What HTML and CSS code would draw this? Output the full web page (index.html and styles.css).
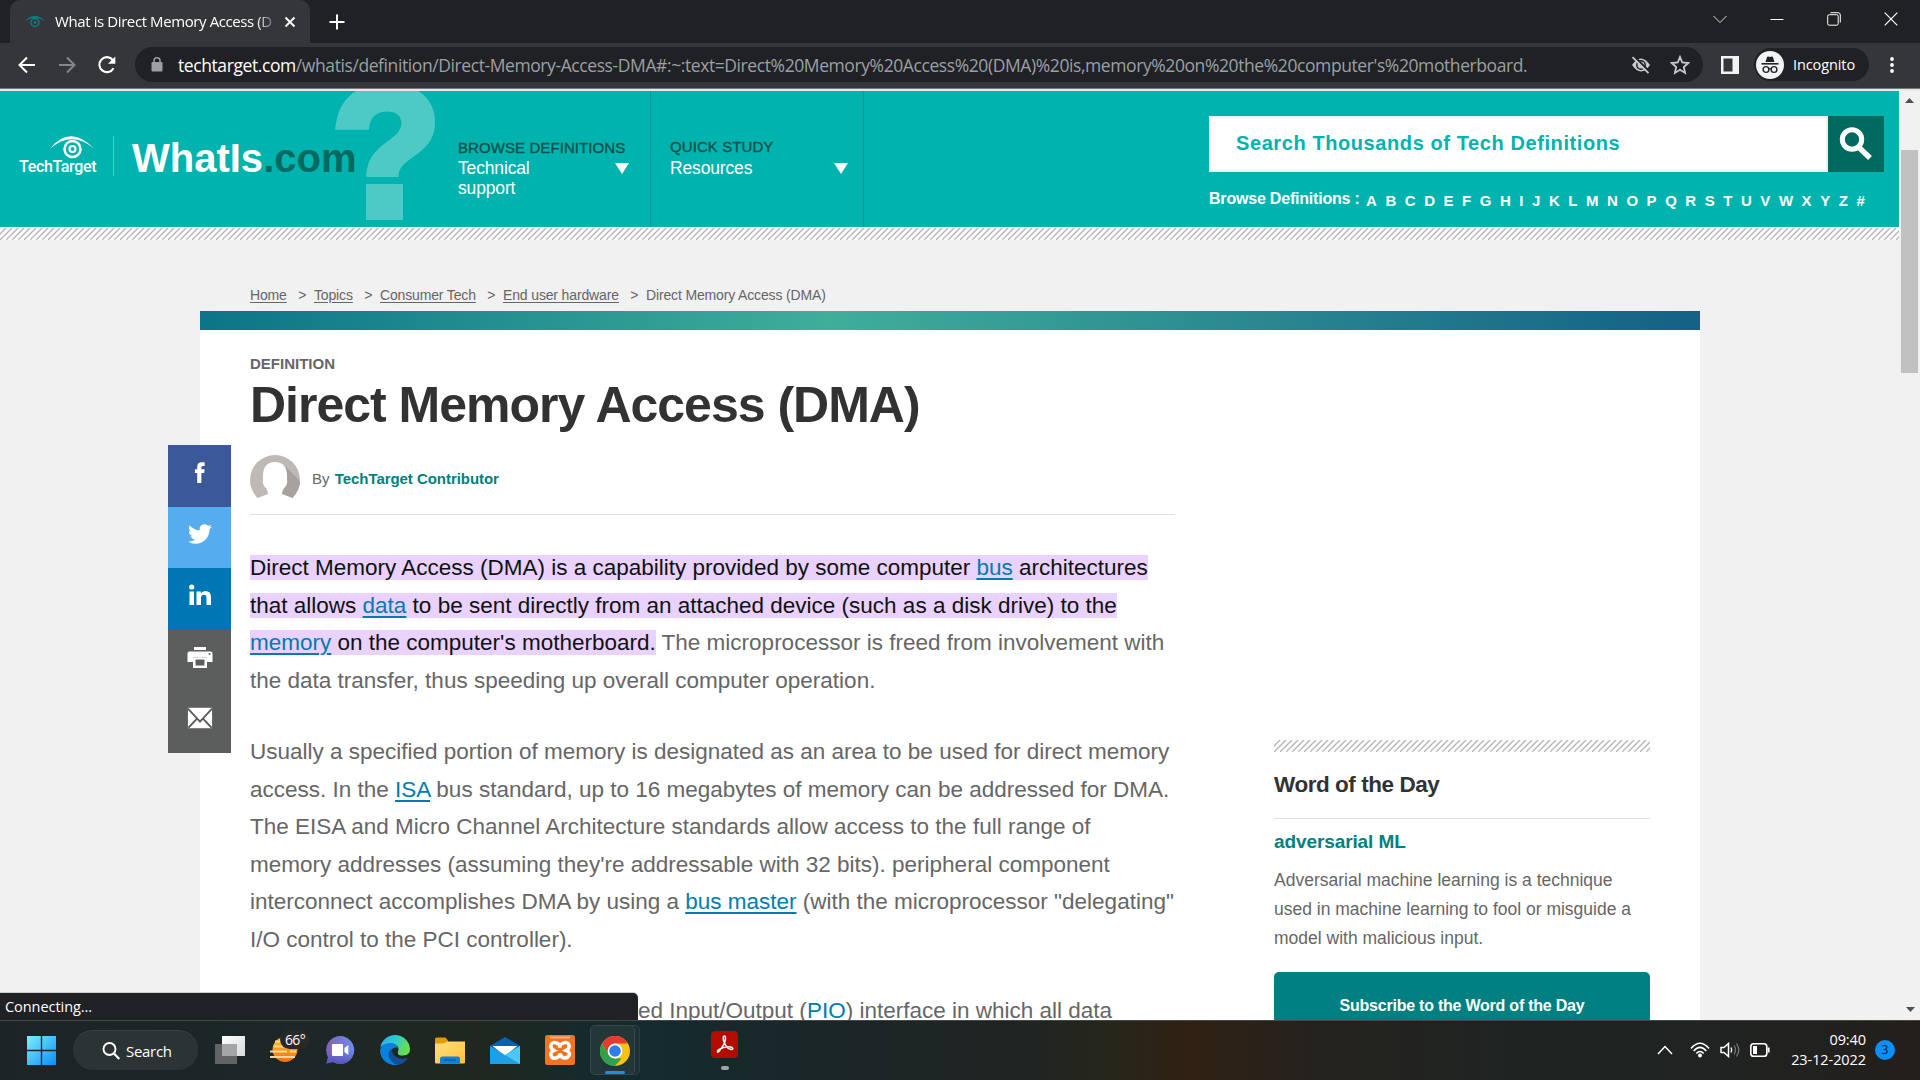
FILE: index.html
```html
<!DOCTYPE html>
<html lang="en">
<head>
<meta charset="utf-8">
<title>What is Direct Memory Access (DMA)?</title>
<link rel="stylesheet" href="styles.css">
</head>
<body>
<div class="screen">
  <div class="tabstrip">
    <div class="tab">
      <svg class="favicon" viewBox="0 0 20 14"><path d="M0 6Q10-4 20 6Q10 0 0 6Z" fill="#0a7f80"/><circle cx="10" cy="7.500" r="4" fill="none" stroke="#0a7f80" stroke-width="1.500"/><circle cx="10" cy="7.500" r="1.600" fill="#0a7f80"/></svg>
      <span class="tab-title">What is Direct Memory Access (D</span>
      <svg class="tab-close" viewBox="0 0 12 12"><path d="M1.500 1.500l9 9M10.500 1.500l-9 9" stroke="#fff" stroke-width="1.900"/></svg>
    </div>
    <svg class="newtab" viewBox="0 0 16 16"><path d="M8 .5v15M.5 8h15" stroke="#fff" stroke-width="2"/></svg>
    <div class="winctl">
      <svg viewBox="0 0 14 14"><path d="M.5 4l6.500 6.500L13.500 4" fill="none" stroke="#ddd"/></svg>
      <svg viewBox="0 0 14 14"><path d="M.5 7.500h13" stroke="#fff"/></svg>
      <svg viewBox="0 0 14 14"><rect x=".7" y="2.700" width="10.500" height="10.500" rx="1.500" fill="none" stroke="#fff"/><path d="M3.500.7h7.500q2.300 0 2.300 2.300v7.500" fill="none" stroke="#fff"/></svg>
      <svg viewBox="0 0 14 14"><path d="M.7.7l12.600 12.600M13.300.7L.7 13.300" stroke="#fff" stroke-width="1.200"/></svg>
    </div>
  </div>
  <div class="toolbar">
    <svg class="nav-i" viewBox="0 0 20 20"><path d="M18 10H3M10 2.500L2.500 10l7.500 7.500" fill="none" stroke="#fff" stroke-width="2"/></svg>
    <svg class="nav-i" viewBox="0 0 20 20"><path d="M2 10h15M10 2.500l7.500 7.500-7.500 7.500" fill="none" stroke="#84868a" stroke-width="2"/></svg>
    <svg class="nav-i" viewBox="0 0 20 20"><path d="M16.500 13.200A7.500 7.500 0 1 1 15.800 5" fill="none" stroke="#fff" stroke-width="2.100"/><path d="M18.300 1.500v7.300h-7.300z" fill="#fff"/></svg>
    <div class="omnibox">
      <svg class="lock" viewBox="0 0 12 15"><rect x=".5" y="5" width="11" height="9.500" rx="1.200" fill="#9aa0a6"/><path d="M3 6V3.800a3 3 0 0 1 6 0V6" fill="none" stroke="#9aa0a6" stroke-width="1.500"/></svg>
      <span class="url"><b>techtarget.com</b>/whatis/definition/Direct-Memory-Access-DMA#:~:text=Direct%20Memory%20Access%20(DMA)%20is,memory%20on%20the%20computer's%20motherboard.</span>
      <svg class="eyeoff" viewBox="0 0 20 18"><path d="M1 9Q10-4 19 9Q10 22 1 9Z" fill="#c8cacd"/><circle cx="10" cy="9" r="4.200" fill="none" stroke="#202124" stroke-width="1.500"/><path d="M3 .2L19 16.200" stroke="#202124" stroke-width="2.200"/><path d="M1.500 1.200L17.500 17.200" stroke="#c8cacd" stroke-width="1.800"/></svg>
      <svg class="star" viewBox="0 0 20 20"><path d="M10 2l2.300 5.500 6 .5-4.500 4 1.300 5.900L10 14.800l-5.100 3.100L6.200 12 1.700 8l6-.5z" fill="none" stroke="#c8cacd" stroke-width="1.800"/></svg>
    </div>
    <svg class="panel" viewBox="0 0 18 18"><path d="M0 0h18v18H0zM2.500 2.500v13h9v-13z" fill="#f1f3f4" fill-rule="evenodd"/></svg>
    <div class="incog">
      <svg viewBox="0 0 28 28"><circle cx="14" cy="14" r="14" fill="#f1f3f4"/><path d="M9.500 11l1.600-5q.3-.8 1.100-.5l1.800.5 1.800-.5q.8-.3 1.100.5l1.600 5z" fill="#202124"/><path d="M5.500 12.800h17" stroke="#202124" stroke-width="1.600"/><g fill="none" stroke="#202124" stroke-width="1.400"><circle cx="10" cy="18.500" r="2.900"/><circle cx="18" cy="18.500" r="2.900"/><path d="M12.900 18q1.100-.8 2.200 0"/></g></svg>
      <span>Incognito</span>
    </div>
    <svg class="dots" viewBox="0 0 4 18"><circle cx="2" cy="3" r="1.900" fill="#fff"/><circle cx="2" cy="9" r="1.900" fill="#fff"/><circle cx="2" cy="15" r="1.900" fill="#fff"/></svg>
  </div>
  <div class="viewport">
    <div class="page">
      <header class="site">
        <span class="question">?</span><i class="question-dot"></i>
        <div class="tt">
          <svg viewBox="0 0 44 24"><path d="M0 12.500Q20-12 44 12.500Q22-6 0 12.500Z" fill="#fff"/><circle cx="22.500" cy="13" r="8" fill="none" stroke="#fff" stroke-width="2.500"/><circle cx="22.500" cy="13" r="3" fill="none" stroke="#fff" stroke-width="2.200"/></svg>
          <span>TechTarget</span>
        </div>
        <div class="brand">WhatIs<span>.com</span></div>
        <nav class="menu menu-a">
          <p class="cap">BROWSE DEFINITIONS</p>
          <div class="pick"><span>Technical<br>support</span><i class="tri"></i></div>
        </nav>
        <nav class="menu menu-b">
          <p class="cap">QUICK STUDY</p>
          <div class="pick"><span>Resources</span><i class="tri"></i></div>
        </nav>
        <div class="finder">
          <div class="search">
            <div class="field"><span>Search Thousands of Tech Definitions</span></div>
            <div class="go"><svg viewBox="0 0 34 34"><circle cx="13" cy="12.500" r="9.700" fill="none" stroke="#fff" stroke-width="5"/><path d="M19.500 20l11.500 11" stroke="#fff" stroke-width="5.500"/></svg></div>
          </div>
          <div class="az"><b>Browse Definitions :</b><div class="letters"><span>A</span><span>B</span><span>C</span><span>D</span><span>E</span><span>F</span><span>G</span><span>H</span><span>I</span><span>J</span><span>K</span><span>L</span><span>M</span><span>N</span><span>O</span><span>P</span><span>Q</span><span>R</span><span>S</span><span>T</span><span>U</span><span>V</span><span>W</span><span>X</span><span>Y</span><span>Z</span><span>#</span></div></div>
        </div>
      </header>
      <svg class="hatch top-hatch" width="1899" height="12"><defs><pattern id="h" width="6" height="12" patternUnits="userSpaceOnUse"><path d="M-6 12L6 0M0 12L12 0M-12 12L0 0" stroke="#b5b5b5" stroke-width="1.300"/></pattern></defs><rect width="1899" height="12" fill="url(#h)"/></svg>
      <div class="crumbs"><a>Home</a><i>&gt;</i><a>Topics</a><i>&gt;</i><a>Consumer Tech</a><i>&gt;</i><a>End user hardware</a><i>&gt;</i><span>Direct Memory Access (DMA)</span></div>
      <main class="card">
        <article>
          <p class="kicker">DEFINITION</p>
          <h1>Direct Memory Access (DMA)</h1>
          <div class="byline">
            <svg viewBox="0 0 50 50"><defs><clipPath id="av"><circle cx="25" cy="25" r="25"/></clipPath></defs><g clip-path="url(#av)"><path d="M0 0h50v50H0z" fill="#bfb9b5"/><path d="M36 12L60 36V50H25V35z" fill="#a8a29e"/></g><path d="M5 44L18 39Q18 36 16 33Q12 30 13 24Q12 7 25 7Q38 7 37 24Q38 30 34 33Q32 36 32 39L45 44V51H5z" fill="#fff"/></svg>
            <span>By <b>TechTarget Contributor</b></span>
          </div>
          <div class="body">
            <p><mark>Direct Memory Access (DMA) is a capability provided by some computer <a>bus</a> architectures<br>that allows <a>data</a> to be sent directly from an attached device (such as a disk drive) to the<br><a>memory</a> on the computer's motherboard.</mark> The microprocessor is freed from involvement with<br>the data transfer, thus speeding up overall computer operation.</p>
            <p>Usually a specified portion of memory is designated as an area to be used for direct memory<br>access. In the <a>ISA</a> bus standard, up to 16 megabytes of memory can be addressed for DMA.<br>The EISA and Micro Channel Architecture standards allow access to the full range of<br>memory addresses (assuming they're addressable with 32 bits). peripheral component<br>interconnect accomplishes DMA by using a <a>bus master</a> (with the microprocessor "delegating"<br>I/O control to the PCI controller).</p>
            <p class="last">ed Input/Output (<a class="plain">PIO</a>) interface in which all data</p>
          </div>
        </article>
        <aside>
          <svg class="hatch" width="376" height="12"><rect width="376" height="12" fill="url(#h)"/></svg>
          <h2>Word of the Day</h2>
          <h3>adversarial ML</h3>
          <p>Adversarial machine learning is a technique<br>used in machine learning to fool or misguide a<br>model with malicious input.</p>
          <div class="subscribe">Subscribe to the Word of the Day</div>
        </aside>
      </main>
      <div class="social">
        <div class="s fb"><svg viewBox="0 0 26 26"><path d="M10 25V14H7.500V10H10V7.500Q10 2.500 15 2.500H18V6.500H16Q14.500 6.500 14.500 8V10H18L17.500 14H14.500V25z" fill="#fff"/></svg></div>
        <div class="s tw"><svg viewBox="0 0 24 24"><path d="M23.950 4.570a10 10 0 0 1-2.820.775 4.960 4.960 0 0 0 2.160-2.720c-.950.555-2 .959-3.130 1.180a4.920 4.920 0 0 0-8.380 4.480C7.690 8.100 4.070 6.130 1.640 3.160a4.820 4.820 0 0 0-.666 2.470c0 1.710.870 3.210 2.190 4.100a4.900 4.900 0 0 1-2.230-.616v.060a4.920 4.920 0 0 0 3.950 4.830 5 5 0 0 1-2.210.085 4.940 4.940 0 0 0 4.600 3.420A9.870 9.870 0 0 1 0 19.540a14 14 0 0 0 7.550 2.210c9.050 0 14-7.500 14-13.990 0-.21 0-.42-.015-.63a9.900 9.900 0 0 0 2.410-2.560z" fill="#fff"/></svg></div>
        <div class="s li"><svg viewBox="0 0 24 24"><path d="M1.500 8.500h4.500V22H1.500zM8.500 8.500h4.300v2Q14.200 8 17.300 8 23 8 23 14v8h-4.500v-7.200q0-3-2.500-3-3 0-3 3.200v7H8.500z" fill="#fff"/><circle cx="3.700" cy="4" r="2.600" fill="#fff"/></svg></div>
        <div class="s gr"><svg viewBox="0 0 26 24"><path d="M7 2h12v3H7zM2.500 6.500h21q2 0 2 2V17H20v-4.500H6V17H.5V8.500q0-2 2-2z" fill="#fff"/><path d="M6 12.500h14V23H6zM8.500 14.500v6h9v-6z" fill="#fff" fill-rule="evenodd"/><circle cx="22.500" cy="9" r="1" fill="#5c5e5d"/></svg></div>
        <div class="s gr"><svg viewBox="0 0 28 24"><path d="M1 1h26v22H1z" fill="#fff"/><path d="M1 2l13 14L27 2M1.500 22.500L11 12.500M26.500 22.500L17 12.500" fill="none" stroke="#5c5e5d" stroke-width="2"/></svg></div>
      </div>
    </div>
    <div class="scroll"><i class="up"></i><i class="thumb"></i><i class="down"></i></div>
    <div class="status">Connecting...</div>
  </div>
  <div class="taskbar">
    <div class="apps">
      <svg class="start" viewBox="0 0 30 30"><defs><linearGradient id="w" x2="1" y2="1"><stop stop-color="#7ceefc"/><stop offset="1" stop-color="#0a8ef8"/></linearGradient></defs><path d="M0 0h14.300v14.300H0zM15.700 0H30v14.300H15.700zM0 15.700h14.300V30H0zM15.700 15.700H30V30H15.700z" fill="url(#w)"/></svg>
      <div class="pill"><svg viewBox="0 0 18 18"><circle cx="7.500" cy="7" r="6" fill="none" stroke="#fff" stroke-width="1.900"/><path d="M12 11.500l5.300 5.500" stroke="#fff" stroke-width="2.200"/></svg>Search</div>
      <svg class="a a1" viewBox="0 0 30 30"><defs><linearGradient id="tv" x2="1" y2="1"><stop stop-color="#fff"/><stop offset="1" stop-color="#d8d9dc"/></linearGradient></defs><path d="M0 9h22v20H0z" fill="#626365"/><path d="M7 1h23v20H7z" fill="url(#tv)"/><path d="M7 9h15v12H7z" fill="#a4a5a6"/></svg>
      <div class="weather"><svg viewBox="0 0 28 28"><defs><linearGradient id="sun" x2="0" y2="1"><stop stop-color="#ffc517"/><stop offset="1" stop-color="#f0701a"/></linearGradient></defs><circle cx="15" cy="12.500" r="12.500" fill="url(#sun)"/><path d="M5 4.500h6M4 9.500h11M0 14.500h17M20 14.500h6M0 20h25" stroke="#f3d6a0" stroke-width="2.200"/></svg><span>66°</span></div>
      <svg class="a a3" viewBox="0 0 30 30"><defs><linearGradient id="ch" x2="1"><stop stop-color="#8261b5"/><stop offset="1" stop-color="#6d8dea"/></linearGradient><linearGradient id="ch2" x2="0" y2="1"><stop offset=".5" stop-color="#5b5fc7" stop-opacity="0"/><stop offset="1" stop-color="#5054bd"/></linearGradient></defs><path d="M15 1a14 14 0 1 1-7 26l-6.500 1.500L3 22A14 14 0 0 1 15 1z" fill="url(#ch)"/><path d="M15 1a14 14 0 1 1-7 26l-6.500 1.500L3 22A14 14 0 0 1 15 1z" fill="url(#ch2)"/><rect x="7" y="9" width="11" height="12" rx="1" fill="#fff"/><path d="M19.500 13l3.800-3v10l-3.800-3z" fill="#fff"/></svg>
      <svg class="a a4" viewBox="0 0 30 30"><defs><linearGradient id="ed" x2="1" y2=".4"><stop stop-color="#29a8ee"/><stop offset=".5" stop-color="#2fc7d0"/><stop offset="1" stop-color="#66e04c"/></linearGradient></defs><path d="M15 0A15 15 0 0 1 30 14Q30 20.500 23 20.500Q17 20.500 18 17Q20 10 13 9Q5 8 .3 12.500A15 15 0 0 1 15 0z" fill="url(#ed)"/><path d="M0 15Q2 8 10.500 8Q16 8 18 12.500Q11 12 10 18Q10 26 19 29.500A15 15 0 0 1 0 15z" fill="#0a82dc"/><path d="M12.500 13.500Q8 16 8.500 20Q10 28 17.500 29.800Q24 29.500 28 22.500Q21 25.500 15.500 21.500Q11 18 12.500 13.500z" fill="#10519a"/></svg>
      <svg class="a a5" viewBox="0 0 30 30"><defs><linearGradient id="fo" x2="1" y2="1"><stop stop-color="#ffe07c"/><stop offset="1" stop-color="#ffc23a"/></linearGradient></defs><path d="M0 4q0-1.500 1.500-1.500h9L13 5.500v6H0z" fill="#e09a0c"/><path d="M0 8.500h9l3-2h18v21q0 1-1 1H1q-1 0-1-1z" fill="url(#fo)"/><path d="M5 28.500V24q0-2.500 2.500-2.500h15Q25 21.500 25 24v4.500z" fill="#1280d4"/><path d="M9 25h12" stroke="#075fa8" stroke-width="1.500"/></svg>
      <svg class="a a6" viewBox="0 0 30 30"><path d="M0 11L15 2l15 9v18H0z" fill="#0b5fae"/><path d="M2.500 11h25L15 21z" fill="#fff"/><path d="M30 11L15 20 30 29z" fill="#35b8ef"/><path d="M0 11l15 9L30 29H0z" fill="#1ea0e6"/><path d="M30 11L15 20 30 29z" fill="#4cc8f7"/></svg>
      <svg class="a a7" viewBox="0 0 30 30"><rect width="30" height="30" rx="2.500" fill="#f07522"/><path d="M4 1.500h22l-2 2H6z" fill="#f8b385"/><path d="M11.500 8q-4.500-1.500-5.500 2t3 5.500q-4 1.500-3 5t5 2.500 4-4.500q1 4 4 4.500t5-2.500-3-5q4-2 3-5.500t-5.500-2-3.500 4.500q0-3.500-3.500-4.500z" fill="none" stroke="#fff" stroke-width="3.400"/></svg>
      <div class="chrome"><svg viewBox="0 0 30 30"><circle cx="15" cy="15" r="15" fill="#fbc116"/><path d="M2 7.500A15 15 0 0 1 28 7.500H15L8.500 18.800z" fill="#e33b2e"/><path d="M2 7.500L8.500 18.800 15 22.500h6.500L15 30A15 15 0 0 1 2 7.500z" fill="#2da14c"/><circle cx="15" cy="15" r="7.400" fill="#fff"/><circle cx="15" cy="15" r="5.800" fill="#2f7de9"/></svg><i></i></div>
      <div class="acro"><svg viewBox="0 0 27 27"><rect width="27" height="27" rx="4" fill="#b30b00"/><path d="M12.500 5.500q2-1.500 2 2 0 4-4 9.500-3.500 5-4 4-.5-2.500 6-4.500 6-1.500 8.500 0 2 2-1 2-3.500-.5-6-5.500-2.500-5-1.500-7.500z" fill="none" stroke="#fff" stroke-width="1.500"/></svg><i></i></div>
    </div>
    <div class="tray">
      <svg class="chev" viewBox="0 0 16 10"><path d="M1 9l7-7.500L15 9" fill="none" stroke="#fff" stroke-width="1.500"/></svg>
      <svg class="wifi" viewBox="0 0 20 16"><g fill="none" stroke="#fff" stroke-width="1.600"><path d="M1 6.500Q10-4 19 6.500"/><path d="M3.700 9Q10 1.800 16.300 9"/><path d="M6.300 11.500Q10 7.500 13.700 11.500"/></g><circle cx="10" cy="13.500" r="2" fill="#fff"/></svg>
      <svg class="vol" viewBox="0 0 20 16"><path d="M1 5.500h3L8.500 1.500v13L4 10.500H1z" fill="none" stroke="#fff" stroke-width="1.500"/><path d="M11 5.500q1.500 2.500 0 5" fill="none" stroke="#fff" stroke-width="1.400"/><path d="M14 3.500q3 4.500 0 9M16.500 1.500q4.500 6.500 0 13" fill="none" stroke="#777" stroke-width="1.300"/></svg>
      <svg class="bat" viewBox="0 0 20 14"><rect x=".8" y=".8" width="16" height="12.400" rx="2.800" fill="none" stroke="#fff" stroke-width="1.600"/><path d="M3 3h4v8H3z" fill="#fff"/><path d="M18.600 4.500v5" stroke="#fff" stroke-width="2"/></svg>
      <div class="clock">09:40<br>23-12-2022</div>
      <div class="badge">3</div>
    </div>
  </div>
</div>
</body>
</html>
```
FILE: styles.css
```css
* { box-sizing: border-box; }
body { margin: 0; background: #202124; font-family: "Liberation Sans", Arial, sans-serif; }
p, h1, h2, h3 { margin: 0; }
svg { display: block; flex: none; }
.screen { width: 1920px; height: 1080px; display: flex; flex-direction: column; overflow: hidden; }

.tabstrip, .toolbar, .status, .taskbar { font-family: "Open Sans", "Noto Sans", sans-serif; color: #fff; }
.tabstrip { height: 43px; flex: none; display: flex; align-items: center; padding-left: 10px; background: #202124; }
.tab { width: 300px; height: 43px; display: flex; align-items: center; padding-left: 15px; background: #35363a; border-radius: 10px 10px 0 0; }
.favicon { width: 20px; height: 14px; }
.tab-title { width: 219px; margin-left: 10px; padding-bottom: 2px; font-size: 15px; letter-spacing: -0.4px; white-space: nowrap; overflow: hidden; -webkit-mask-image: linear-gradient(90deg, #000 92%, transparent 102%); }
.tab-close { width: 12px; height: 12px; margin-left: 10px; }
.newtab { width: 16px; height: 16px; margin-left: 19px; }
.winctl { margin-left: auto; display: flex; gap: 43px; padding: 0 22px 6px 0; }
.winctl svg { width: 14px; height: 14px; }

.toolbar { height: 48px; flex: none; display: flex; align-items: center; padding: 0 26px 3px 17px; background: #35363a; border-bottom: 2px solid #e8e8e8; box-shadow: inset 0 -1px #77787b; }
.nav-i { width: 20px; height: 20px; margin-right: 20px; }
.omnibox { width: 1568px; height: 35px; margin-left: -2px; display: flex; align-items: center; background: #202124; border-radius: 18px; padding: 0 13px 0 16px; }
.lock { width: 12px; height: 15px; }
.url { width: 1349px; margin-left: 15px; font-size: 17.500px; letter-spacing: -0.41px; color: #9aa0a6; white-space: nowrap; }
.url b { font-weight: 400; color: #fff; }
.eyeoff { width: 20px; height: 18px; margin-left: auto; }
.star { width: 20px; height: 20px; margin-left: 19px; }
.panel { width: 18px; height: 18px; margin-left: 18px; }
.incog { width: 115px; height: 33px; margin-left: 15px; padding-left: 2px; display: flex; align-items: center; gap: 9px; font-size: 14.5px; letter-spacing: -0.1px; background: #202124; border-radius: 17px; }
.incog svg { width: 28px; height: 28px; }
.dots { width: 4px; height: 18px; margin-left: auto; }

.viewport { height: 929px; flex: none; display: flex; position: relative; overflow: hidden; }
.page { width: 1899px; height: 929px; background: #f1f1f1; position: relative; overflow: hidden; }
.site { height: 136px; display: flex; background: #00b3ae; position: relative; overflow: hidden; }
.question { position: absolute; left: 332px; top: -40px; font-size: 178px; line-height: 200px; font-weight: 700; color: #4dcac6; -webkit-text-stroke: 9px #4dcac6; clip-path: inset(0 -10px 74px -10px); }
.question-dot { position: absolute; left: 366px; top: 93px; width: 37px; height: 36px; background: #4dcac6; }
.tt { width: 114px; height: 40px; margin-top: 45px; padding-left: 19px; border-right: 1px solid #4dcac6; color: #fff; position: relative; }
.tt svg { width: 44px; height: 24px; margin-left: 31px; }
.tt span { display: block; font-family: Roboto, sans-serif; font-weight: 500; font-size: 16px; line-height: 14px; letter-spacing: -0.35px; }
.brand { width: 343px; padding: 44px 0 0 18px; font-size: 40px; line-height: 46px; font-weight: 700; color: #fff; position: relative; }
.brand span { color: #006a60; }
.menu { padding-top: 47px; border-right: 1px solid #009a92; }
.menu-a { width: 194px; padding-left: 1px; }
.menu-b { width: 213px; padding: 46px 0 0 19px; }
.cap { font-size: 15px; line-height: 20px; color: #004f48; letter-spacing: .08px; -webkit-text-stroke: .3px #004f48; white-space: nowrap; }
.pick { display: flex; justify-content: space-between; padding-right: 21px; font-size: 17.500px; line-height: 20px; letter-spacing: -0.15px; color: #fff; }
.menu-b .pick { padding-top: 1px; padding-right: 15px; }
.tri { width: 14px; height: 11px; margin-top: 5px; background: #fff; clip-path: polygon(0 0, 100% 0, 50% 100%); }
.finder { width: 675px; margin-left: auto; padding: 25px 0 0; margin-right: 15px; }
.search { display: flex; height: 56px; }
.field { width: 619px; background: #fff; border: 2px solid #eee; padding-left: 25px; font-size: 20px; line-height: 50px; font-weight: 700; color: #00b3ae; letter-spacing: .59px; }
.go { width: 56px; display: flex; align-items: center; justify-content: center; background: #006a60; }
.go svg { width: 34px; height: 34px; }
.az { display: flex; align-items: flex-start; margin-top: 17px; color: #fff; font-size: 16px; line-height: 20px; white-space: nowrap; }
.az b { width: 157px; letter-spacing: -0.2px; }
.letters { width: 499px; margin-top: 2px; display: flex; justify-content: space-between; font-size: 15px; font-weight: 700; }
.hatch { background: #fff; }
.top-hatch { margin-top: 1px; box-shadow: 0 -1px #fff; }

.crumbs { display: flex; height: 71px; padding: 46px 0 0 250px; font-size: 14px; line-height: 18px; letter-spacing: -0.15px; color: #666; white-space: nowrap; }
.crumbs a { text-decoration: underline; text-underline-offset: 2px; }
.crumbs i { font-style: normal; margin: 0 7.700px 0 11.500px; }
.card { width: 1500px; height: 720px; margin-left: 200px; background: linear-gradient(90deg, #0b7487, #3fae9a 42%, #136186) 0 0 / 100% 19px no-repeat #fff; display: flex; padding: 19px 50px 0; }
article { width: 926px; }
.kicker { padding-top: 25px; font-size: 15px; line-height: 18px; font-weight: 700; color: #666; }
h1 { font-size: 50px; line-height: 58px; letter-spacing: -1px; color: #323232; padding-top: 3px; white-space: nowrap; }
.byline { height: 81px; padding: 0 0 9px; display: flex; align-items: flex-end; gap: 12px; border-bottom: 1px solid #e0e0e0; font-size: 15px; line-height: 18px; color: #666; }
.byline svg { width: 50px; height: 50px; }
.byline span { padding-bottom: 17px; }
.byline b { color: #008080; margin-left: 1px; letter-spacing: -0.05px; }
.body { padding-top: 34px; font-size: 22.500px; line-height: 37.500px; color: #666; white-space: nowrap; }
.body p { margin-bottom: 34px; }
.body mark { background: #e9d2fd; color: #111; }
.body a { color: #007cad; text-decoration: underline; text-decoration-thickness: 2px; text-underline-offset: 3px; }
.body a.plain { text-decoration: none; }
.body .last { padding-left: 388px; }
aside { width: 376px; margin-left: 99px; padding-top: 410px; }
aside h2 { height: 67px; padding-top: 20px; font-size: 22.500px; line-height: 26px; letter-spacing: -0.45px; color: #323232; border-bottom: 1px solid #e0e0e0; }
aside h3 { padding-top: 11px; font-size: 19px; line-height: 24px; letter-spacing: -0.1px; color: #008080; }
aside p { padding-top: 12px; font-size: 17.500px; line-height: 29px; color: #666; white-space: nowrap; }
.subscribe { height: 70px; margin-top: 19px; border-radius: 5px; background: #008080; color: #fff; text-align: center; font-weight: 700; font-size: 16px; line-height: 67px; letter-spacing: -0.23px; }
.social { position: absolute; left: 168px; top: 354px; width: 63px; }
.s { height: 61.600px; display: flex; justify-content: center; padding-top: 15px; }
.s svg { width: 26px; height: 24px; }
.fb { background: #3b5998; } .tw { background: #55acee; } .li { background: #0077b5; } .gr { background: #5c5e5d; }
.scroll { width: 21px; background: #f1f1f1; display: flex; flex-direction: column; padding-left: 2px; }
.scroll i { display: block; }
.up { width: 9px; height: 5px; margin: 7px 0 47px 4px; background: #505050; clip-path: polygon(50% 0, 100% 100%, 0 100%); }
.thumb { width: 17px; height: 223px; background: #c1c1c1; }
.down { width: 9px; height: 5px; margin: auto 0 8px 5px; background: #505050; clip-path: polygon(0 0, 100% 0, 50% 100%); }
.status { position: absolute; left: 0; bottom: 0; width: 638px; height: 27px; padding-left: 5px; background: #202124; border-radius: 0 5px 0 0; box-shadow: 0 -1px #ccc; font-size: 14.500px; line-height: 28px; letter-spacing: -0.05px; }

.taskbar { height: 60px; flex: none; display: flex; justify-content: space-between; border-top: 1px solid #454745; background: linear-gradient(90deg, #1c2425 0, #1d2728 16%, #1f271e 25%, #132b30 33%, #1c2526 45%, #202422 54%, #26261a 58%, #302113 62%, #25221e 68%, #1e2422 80%, #202321 90%, #231f1c 100%); }
.apps { display: flex; align-items: center; padding: 0 0 1px 27px; }
.start { width: 29px; height: 29px; }
.pill { width: 125px; height: 40px; margin-left: 17px; padding-left: 29px; display: flex; align-items: center; gap: 6px; border-radius: 20px; background: #2c3334; border-top: 1px solid #3c4243; font-size: 15px; letter-spacing: -0.3px; }
.pill svg { width: 18px; height: 18px; }
.a { width: 30px; height: 30px; }
.a1 { margin-left: 17px; }
.weather { width: 40px; height: 41px; margin-left: 25px; padding-top: 7px; position: relative; }
.weather svg { width: 28px; height: 28px; }
.weather span { position: absolute; left: 10px; top: 0; width: 30px; height: 19px; border-radius: 10px; background: #292929; font-size: 14px; line-height: 19px; text-align: center; letter-spacing: -0.6px; }
.a3 { margin-left: 15px; }
.a4, .a5, .a6, .a7 { margin-left: 25px; }
.chrome { width: 45px; height: 50px; margin: 0 5px 0 15px; padding-top: 10px; border: 1px solid #37484b; border-radius: 5px; background: #23363a; box-shadow: 5px 0 0 -1px #1d3035, 5px 0 #2e4246; display: flex; flex-direction: column; align-items: center; }
.chrome svg { width: 30px; height: 30px; margin-left: 5px; }
.chrome i { width: 20px; height: 4px; margin: 5px 0 0 5px; border-radius: 2px; background: #1590f5; }
.acro { width: 27px; height: 39px; margin: 1px 0 0 71px; display: flex; flex-direction: column; align-items: center; justify-content: space-between; }
.acro svg { width: 27px; height: 27px; }
.acro i { width: 8px; height: 4px; border-radius: 2px; background: #9fa4a5; }
.tray { display: flex; align-items: center; padding: 0 25px 2px 0; }
.chev { width: 16px; height: 10px; }
.wifi { width: 20px; height: 16px; margin-left: 17px; }
.vol { width: 20px; height: 16px; margin-left: 10px; }
.bat { width: 20px; height: 14px; margin-left: 10px; }
.clock { width: 90px; margin-left: 6px; text-align: right; font-size: 14.500px; line-height: 20px; letter-spacing: -0.08px; }
.badge { width: 20px; height: 20px; margin-left: 9px; border-radius: 50%; background: #0a8ffd; color: #111; font-size: 12px; line-height: 20px; text-align: center; }
```
